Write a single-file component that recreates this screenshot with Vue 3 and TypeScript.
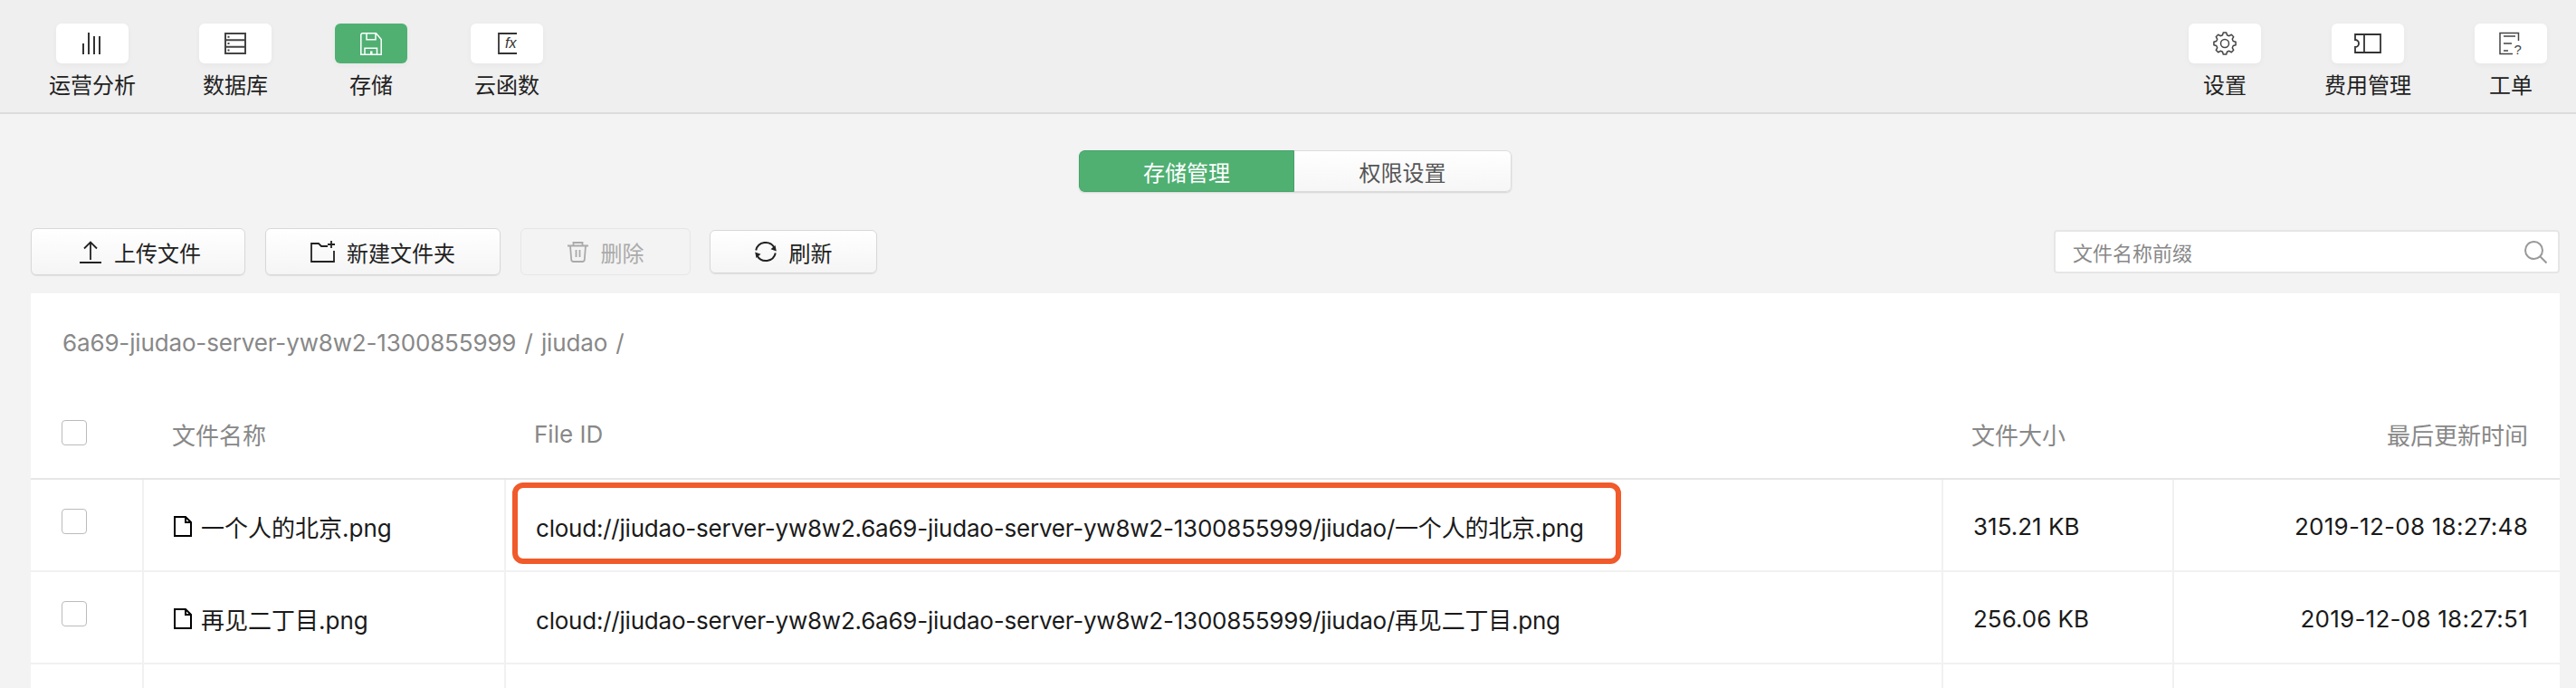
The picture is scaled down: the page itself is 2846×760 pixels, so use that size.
<script setup lang="ts">
interface FileRow {
  name: string
  id: string
  size: string
  time: string
}

const bucket = 'cloud://jiudao-server-yw8w2.6a69-jiudao-server-yw8w2-1300855999/jiudao/'

const rows: FileRow[] = [
  { name: '一个人的北京.png', id: bucket + '一个人的北京.png', size: '315.21 KB', time: '2019-12-08 18:27:48' },
  { name: '再见二丁目.png', id: bucket + '再见二丁目.png', size: '256.06 KB', time: '2019-12-08 18:27:51' }
]

// 8 齿齿轮轮廓
function gearPath(): string {
  const pt = (deg: number, r: number) => {
    const a = ((deg - 90) * Math.PI) / 180
    return `${(13 + r * Math.cos(a)).toFixed(2)} ${(13 + r * Math.sin(a)).toFixed(2)}`
  }
  const parts: string[] = []
  for (let k = 0; k < 8; k++) {
    const c = k * 45
    parts.push(`${pt(c - 15, 9.6)} L${pt(c - 8, 12.2)} L${pt(c + 8, 12.2)} L${pt(c + 15, 9.6)}`)
  }
  return `M${parts.join(' L')} Z`
}

const gear = gearPath()
</script>

<template>
  <div class="page">
    <header class="topbar">
      <nav class="nav-group">
        <div class="nav-item">
          <span class="nav-btn">
            <svg width="22" height="24" viewBox="0 0 22 24" fill="none" stroke="#333" stroke-width="2">
              <path d="M1 12v12M7 0v24M13 4v20M19 4v20" />
            </svg>
          </span>
          <span class="nav-label">运营分析</span>
        </div>
        <div class="nav-item">
          <span class="nav-btn">
            <svg width="24" height="24" viewBox="0 0 24 24" fill="none" stroke="#444" stroke-width="2">
              <path d="M1 1h22v22H1zM1 8.300h22M1 15.700h22" />
              <path d="M3.500 4.700h2M3.500 12h2M3.500 19.400h2" />
            </svg>
          </span>
          <span class="nav-label">数据库</span>
        </div>
        <div class="nav-item">
          <span class="nav-btn active">
            <svg width="24" height="25" viewBox="0 0 24 25" fill="none" stroke="#fff" stroke-width="1.500">
              <path d="M2 .8h15.500l5.700 6.700v16.700H.8V2zM7 .8v7h10v-7M5 24.200v-7h13.500v7" />
              <path d="M11 20.500h2.500v3.700H11z" fill="#fff" stroke="none" />
            </svg>
          </span>
          <span class="nav-label">存储</span>
        </div>
        <div class="nav-item">
          <span class="nav-btn">
            <svg width="21" height="24" viewBox="0 0 21 24" fill="none" stroke="#333" stroke-width="1.800">
              <path d="M21 1H1v22h20" />
              <text x="8" y="17" class="fx">fx</text>
            </svg>
          </span>
          <span class="nav-label">云函数</span>
        </div>
      </nav>
      <nav class="nav-group">
        <div class="nav-item">
          <span class="nav-btn">
            <svg width="26" height="26" viewBox="0 0 26 26" fill="none" stroke="#444" stroke-width="1.500" stroke-linejoin="round">
              <circle cx="13" cy="13" r="4.500" />
              <path :d="gear" />
            </svg>
          </span>
          <span class="nav-label">设置</span>
        </div>
        <div class="nav-item">
          <span class="nav-btn">
            <svg width="30" height="22" viewBox="0 0 30 22" fill="none" stroke="#333" stroke-width="1.800">
              <path d="M1 1h28v20H1v-6a4 4 0 0 0 0-8zM11 1v20" />
            </svg>
          </span>
          <span class="nav-label">费用管理</span>
        </div>
        <div class="nav-item">
          <span class="nav-btn">
            <svg class="help-icon" width="26" height="26" viewBox="0 0 26 26" fill="none" stroke="#444" stroke-width="1.500">
              <path d="M21.500 10V1.500H1v23h14M5 5h13M5 13h9M5 21h5" />
              <text x="16.500" y="25" class="help">?</text>
            </svg>
          </span>
          <span class="nav-label">工单</span>
        </div>
      </nav>
    </header>

    <main class="content">
      <div class="tabs">
        <div class="tab tab-on">存储管理</div>
        <div class="tab">权限设置</div>
      </div>

      <div class="toolbar">
        <div class="actions">
          <button class="btn upload" type="button">
            <svg width="24" height="25" viewBox="0 0 24 25" fill="none" stroke="#222" stroke-width="1.800">
              <path d="M12 21V2M5 8.500l7-7 7 7M0 24h24" />
            </svg>
            上传文件
          </button>
          <button class="btn folder" type="button">
            <svg width="28" height="24" viewBox="0 0 28 24" fill="none" stroke="#222" stroke-width="1.800">
              <path d="M19 6h-7L9 3H1v20h25V11M23 0v8M19 4h8" />
            </svg>
            新建文件夹
          </button>
          <button class="btn remove" type="button">
            <svg width="23" height="23" viewBox="0 0 23 23" fill="none" stroke="#aaa" stroke-width="1.800">
              <path d="M0 4.500h23M6.500 4.500V1h10v3.500M3 4.500l1.200 15a2.500 2.500 0 0 0 2.500 2.500h9.600a2.500 2.500 0 0 0 2.500-2.500L20 4.500M9.500 9v8M13.500 9v8" />
            </svg>
            删除
          </button>
          <button class="btn refresh" type="button">
            <svg width="24" height="24" viewBox="0 0 24 24" fill="none" stroke="#222" stroke-width="2">
              <path d="M1.200 10.500A11 11 0 0 1 21.500 7.500M22.800 13.500A11 11 0 0 1 2.500 16.500" />
              <path d="M23.800 11.500l-6.300-2.200 5-4.300zM.2 12.500l6.300 2.200-5 4.300z" fill="#222" stroke="none" />
            </svg>
            刷新
          </button>
        </div>
        <div class="search">
          <span class="search-hint">文件名称前缀</span>
          <svg width="25" height="25" viewBox="0 0 25 25" fill="none" stroke="#999" stroke-width="2">
            <circle cx="10.500" cy="10.500" r="9.500" />
            <path d="M17.500 17.500l7 7" />
          </svg>
        </div>
      </div>

      <section class="panel">
        <div class="crumbs">6a69-jiudao-server-yw8w2-1300855999 / jiudao /</div>
        <div class="thead">
          <div class="cell-check"><span class="check" /></div>
          <div class="th">文件名称</div>
          <div class="th">File ID</div>
          <div class="th">文件大小</div>
          <div class="th th-right">最后更新时间</div>
        </div>
        <div v-for="(row, i) in rows" :key="row.name" class="row">
          <div class="cell-check"><span class="check" /></div>
          <div class="td td-name">
            <svg width="20" height="23" viewBox="0 0 20 23" fill="none" stroke="#000" stroke-width="2">
              <path d="M1 1h12l6 6v15H1zM13 1v6h6" />
            </svg>
            {{ row.name }}
          </div>
          <div class="td td-id">
            {{ row.id }}
            <span v-if="i === 0" class="mark" />
          </div>
          <div class="td td-size">{{ row.size }}</div>
          <div class="td td-time">{{ row.time }}</div>
        </div>
        <div class="row row-empty">
          <div class="cell-check" />
          <div class="td" />
          <div class="td" />
          <div class="td" />
          <div class="td" />
        </div>
      </section>
    </main>
  </div>
</template>

<style scoped>
.page {
  height: 760px;
  overflow: hidden;
  background: #f3f3f3;
  color: #222;
  font-family: Inter, "Noto Sans CJK SC", sans-serif;
}

.topbar {
  display: flex;
  justify-content: space-between;
  box-sizing: border-box;
  height: 126px;
  padding: 26px 32px 0 54px;
  background: #efefef;
  border-bottom: 2px solid #dcdcdc;
}

.nav-group {
  display: flex;
  gap: 70px;
}

.nav-item {
  display: flex;
  flex-direction: column;
  align-items: center;
  gap: 12px;
}

.nav-btn {
  display: flex;
  align-items: center;
  justify-content: center;
  width: 80px;
  height: 44px;
  border-radius: 6px;
  background: #fff;
  box-shadow: 0 2px 6px rgba(0, 0, 0, 0.04);
}

.nav-btn.active {
  background: #4fb072;
}

.nav-label {
  font-size: 24px;
  line-height: 26px;
  color: #222;
  white-space: nowrap;
}

.fx {
  font: italic 16px "Liberation Sans", sans-serif;
  fill: #333;
  stroke: none;
}

.help {
  font: 15px "Liberation Sans", sans-serif;
  fill: #444;
  stroke: none;
}

.help-icon {
  overflow: visible;
}

.content {
  display: flex;
  flex-direction: column;
  padding: 40px 18px 0 34px;
}

.tabs {
  display: flex;
  align-self: center;
  height: 46px;
  border-radius: 6px;
  box-shadow: 0 1px 2px rgba(0, 0, 0, 0.14);
  overflow: hidden;
}

.tab {
  display: flex;
  align-items: center;
  justify-content: center;
  box-sizing: border-box;
  width: 240px;
  border: 1px solid #dcdcdc;
  border-left: 0;
  border-radius: 0 6px 6px 0;
  font-size: 24px;
  color: #555;
  background: linear-gradient(#fff, #f6f6f6);
}

.tab-on {
  width: 238px;
  border: 1px solid #45a368;
  border-radius: 6px 0 0 6px;
  color: #fff;
  background: #4fb072;
}

.toolbar {
  display: flex;
  justify-content: space-between;
  align-items: center;
  height: 52px;
  margin-top: 40px;
}

.actions {
  display: flex;
  align-items: center;
  gap: 22px;
}

.btn {
  display: flex;
  align-items: center;
  justify-content: center;
  gap: 14px;
  box-sizing: border-box;
  height: 52px;
  padding: 0;
  border: 1px solid #d8d8d8;
  border-radius: 6px;
  background: linear-gradient(#fff, #f5f5f5);
  box-shadow: 0 1px 1px rgba(0, 0, 0, 0.08);
  font: inherit;
  font-size: 24px;
  color: #222;
}

.upload {
  width: 237px;
  padding-left: 5px;
}

.folder {
  width: 260px;
  gap: 12px;
}

.remove {
  width: 188px;
  border-color: #e6e6e6;
  color: #aaa;
  background: #f3f3f3;
  box-shadow: none;
}

.refresh {
  width: 185px;
  height: 48px;
  margin-left: -1px;
}

.search {
  display: flex;
  align-items: center;
  justify-content: space-between;
  box-sizing: border-box;
  width: 559px;
  height: 48px;
  padding: 0 12px 0 19px;
  border: 2px solid #e6e6e6;
  border-radius: 4px;
  background: #fff;
}

.search-hint {
  font-size: 22px;
  color: #888;
}

.panel {
  margin-top: 20px;
  background: #fff;
}

.crumbs {
  height: 104px;
  padding-left: 35px;
  font-size: 26px;
  line-height: 110px;
  letter-spacing: -0.15px;
  word-spacing: 2px;
  color: #888;
}

.thead,
.row {
  display: grid;
  grid-template-columns: 123px 400px 1588px 255px 428px;
  box-sizing: border-box;
}

.thead {
  align-items: center;
  height: 102px;
  border-bottom: 2px solid #e6e6e6;
}

.row {
  height: 102px;
  border-bottom: 2px solid #f1f1f1;
}

.row-empty {
  border-bottom: 0;
}

.cell-check {
  padding-left: 34px;
  display: flex;
  align-items: center;
}

.row .cell-check {
  margin-bottom: 8px;
}

.check {
  box-sizing: border-box;
  width: 28px;
  height: 28px;
  border: 1px solid #bbb;
  border-radius: 4px;
  background: #fff;
}

.th {
  padding: 2px 0 0 33px;
  font-size: 26px;
  color: #888;
}

.th-right {
  padding: 2px 35px 0 0;
  text-align: right;
}

.td {
  position: relative;
  display: flex;
  align-items: center;
  box-sizing: border-box;
  padding: 2px 0 0 33px;
  border-left: 2px solid #f1f1f1;
  font-size: 26px;
  color: #1a1a1a;
  white-space: nowrap;
}

.td-name {
  gap: 10px;
}

.td-id {
  letter-spacing: -0.22px;
}

.td-time {
  justify-content: flex-end;
  padding: 2px 35px 0 0;
  letter-spacing: 0.25px;
}

.mark {
  position: absolute;
  left: 7px;
  top: 3px;
  width: 1225px;
  height: 90px;
  box-sizing: border-box;
  border: 6px solid #f15a2b;
  border-radius: 12px;
}
</style>

<style>
html,
body {
  margin: 0;
  overflow: hidden;
}
</style>
